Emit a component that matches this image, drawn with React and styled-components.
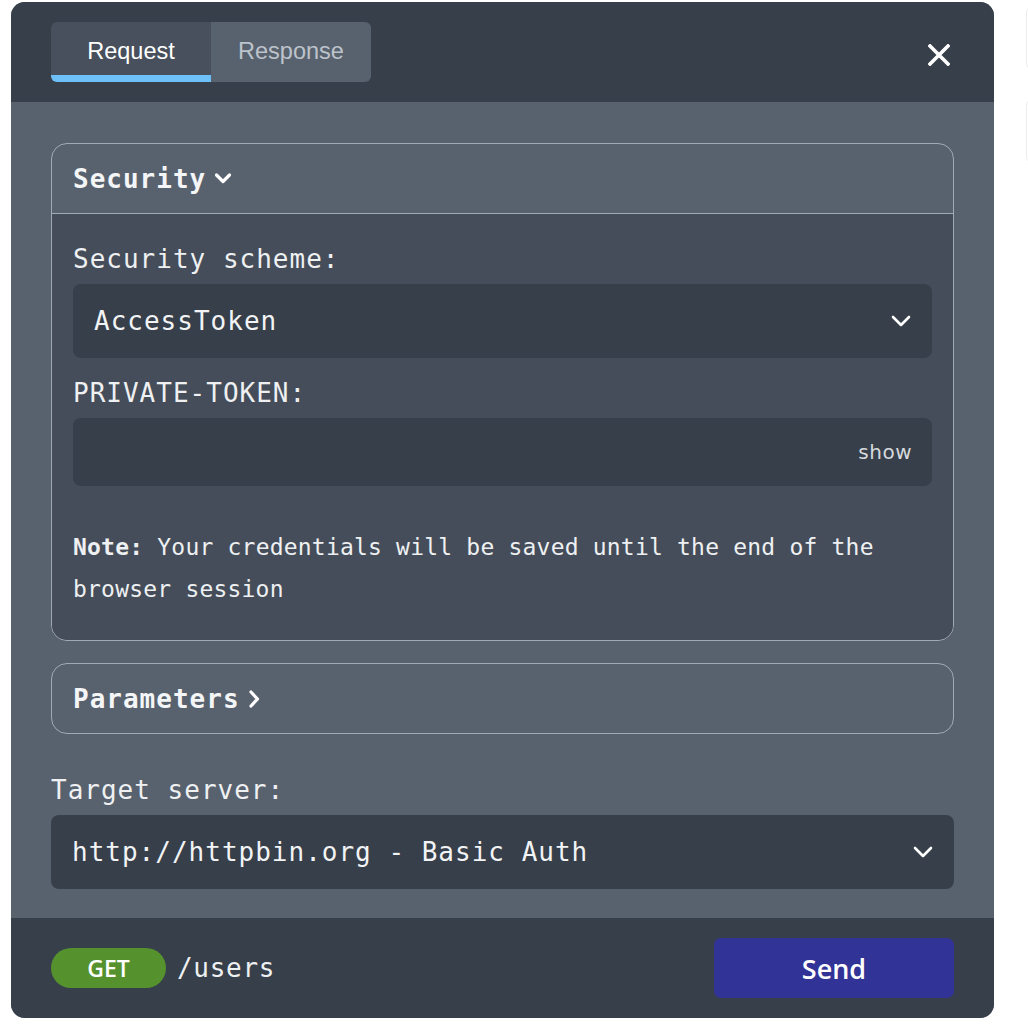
import React from "react";
import styled, { createGlobalStyle, css } from "styled-components";

const GlobalStyle = createGlobalStyle`
  html, body {
    margin: 0;
    padding: 0;
    background: #ffffff;
    overflow: hidden;
  }
  * { box-sizing: border-box; }
`;

const MONO = `"DejaVu Sans Mono", "Liberation Mono", monospace`;
const SANS = `"Open Sans", "Noto Sans", sans-serif`;

const Page = styled.div`
  display: flex;
  align-items: flex-start;
  gap: 32px;
  padding: 2px 0 0 11px;
  width: 1100px;
`;

const Panel = styled.div`
  width: 983px;
  flex: none;
  display: flex;
  flex-direction: column;
  border-radius: 14px;
  overflow: hidden;
  background: #58626e;
  color: #f2f3f5;
  font-family: ${MONO};
`;

const Header = styled.div`
  height: 100px;
  background: #363f4a;
  display: flex;
  align-items: center;
  justify-content: space-between;
  padding: 0 44px 0 40px;
`;

const Tabs = styled.div`
  display: flex;
  height: 60px;
  border-radius: 6px;
  overflow: hidden;
`;

const Tab = styled.div`
  width: 160px;
  display: flex;
  align-items: center;
  justify-content: center;
  padding-bottom: 1px;
  font-family: "Liberation Sans", Arial, sans-serif;
  font-size: 23.5px;
  ${(p) =>
    p.$active
      ? css`
          background: #47505c;
          color: #ffffff;
          box-shadow: inset 0 -7px 0 #6dc1f8;
        `
      : css`
          background: #58626e;
          color: #bcc3cb;
        `}
`;

const CloseButton = styled.div`
  width: 22px;
  height: 22px;
  margin-top: 6px;
  display: flex;
`;

const Body = styled.div`
  display: flex;
  flex-direction: column;
  padding: 41px 40px 29px;
`;

const Section = styled.div`
  border: 1px solid #a0aab5;
  border-radius: 16px;
  overflow: hidden;
  & + & {
    margin-top: 22px;
  }
`;

const SectionHeader = styled.div`
  height: ${(p) => (p.$open ? "70px" : "69px")};
  display: flex;
  align-items: center;
  gap: 8px;
  padding: 0 21px;
  font-weight: bold;
  font-size: 26px;
  letter-spacing: 1px;
  color: #f4f5f7;
  ${(p) => p.$open && css`border-bottom: 1px solid #a0aab5;`}
`;

const SectionBody = styled.div`
  background: #444d59;
  padding: 27px 21px 30px;
  display: flex;
  flex-direction: column;
`;

const FieldLabel = styled.div`
  font-size: 26px;
  line-height: 36px;
  letter-spacing: 1px;
  color: #eef0f2;
  margin-top: ${(p) => p.$top || 0}px;
  margin-bottom: 7px;
`;

const SelectBox = styled.div`
  height: 74px;
  border-radius: 8px;
  background: #363f4a;
  display: flex;
  align-items: center;
  justify-content: space-between;
  padding: 0 21px;
  font-size: 26px;
  letter-spacing: 1px;
  color: #f2f3f5;
`;

const InputBox = styled.div`
  height: 68px;
  border-radius: 8px;
  background: #363f4a;
  display: flex;
  align-items: center;
  justify-content: flex-end;
  padding: 0 20px;
`;

const ShowToggle = styled.span`
  font-family: "DejaVu Sans", sans-serif;
  font-size: 20px;
  letter-spacing: 0.5px;
  color: #d6dade;
`;

const Note = styled.p`
  margin: 40px 0 0;
  font-size: 23px;
  line-height: 42px;
  letter-spacing: 0.2px;
  color: #eef0f2;
`;

const NoteLead = styled.strong`
  font-weight: bold;
`;

const Footer = styled.div`
  height: 100px;
  background: #363f4a;
  display: flex;
  align-items: center;
  padding: 0 40px;
`;

const MethodPill = styled.span`
  width: 115px;
  height: 40px;
  border-radius: 20px;
  background: #55922e;
  display: flex;
  align-items: center;
  justify-content: center;
  font-family: ${SANS};
  font-weight: 600;
  font-size: 23px;
  color: #ffffff;
`;

const PathText = styled.span`
  margin-left: 11px;
  font-size: 26px;
  letter-spacing: 0.7px;
  color: #eef0f2;
`;

const SendButton = styled.button`
  margin-left: auto;
  width: 240px;
  height: 60px;
  border: none;
  border-radius: 7px;
  background: #313397;
  color: #ffffff;
  font-family: ${SANS};
  font-weight: 600;
  font-size: 27px;
  cursor: pointer;
`;

const SideColumn = styled.div`
  display: flex;
  flex-direction: column;
  gap: 27px;
  padding-top: 3px;
`;

const GhostCard = styled.div`
  width: 200px;
  height: 66px;
  border: 1px solid #ececef;
  border-radius: 8px;
`;

const ChevronDown = ({ size = 20, stroke = 2.6 }) => (
  <svg width={size} height={size * 0.62} viewBox="0 0 20 12.4" fill="none">
    <path
      d="M2 2 L10 10 L18 2"
      stroke="#ffffff"
      strokeWidth={stroke}
      strokeLinecap="round"
      strokeLinejoin="round"
    />
  </svg>
);

const ChevronSmallDown = () => (
  <svg width="18" height="13" viewBox="0 0 18 13" fill="none">
    <path
      d="M2.5 3 L9 9.5 L15.5 3"
      stroke="#ffffff"
      strokeWidth="3.2"
      strokeLinecap="round"
      strokeLinejoin="round"
    />
  </svg>
);

const ChevronSmallRight = () => (
  <svg width="13" height="20" viewBox="0 0 13 20" fill="none">
    <path
      d="M3 3 L9.5 10 L3 17"
      stroke="#ffffff"
      strokeWidth="3.2"
      strokeLinecap="round"
      strokeLinejoin="round"
    />
  </svg>
);

const CloseIcon = () => (
  <svg width="22" height="22" viewBox="0 0 22 22" fill="none">
    <path
      d="M2 2 L20 20 M20 2 L2 20"
      stroke="#ffffff"
      strokeWidth="3.6"
      strokeLinecap="square"
    />
  </svg>
);

export default function App() {
  return (
    <>
      <GlobalStyle />
      <Page>
        <Panel>
          <Header>
            <Tabs>
              <Tab $active>Request</Tab>
              <Tab>Response</Tab>
            </Tabs>
            <CloseButton>
              <CloseIcon />
            </CloseButton>
          </Header>
          <Body>
            <Section>
              <SectionHeader $open>
                Security
                <ChevronSmallDown />
              </SectionHeader>
              <SectionBody>
                <FieldLabel>Security scheme:</FieldLabel>
                <SelectBox>
                  AccessToken
                  <ChevronDown />
                </SelectBox>
                <FieldLabel $top={17}>PRIVATE-TOKEN:</FieldLabel>
                <InputBox>
                  <ShowToggle>show</ShowToggle>
                </InputBox>
                <Note>
                  <NoteLead>Note:</NoteLead>{" "}Your credentials will be saved until the end of the browser session
                </Note>
              </SectionBody>
            </Section>
            <Section>
              <SectionHeader>
                Parameters
                <ChevronSmallRight />
              </SectionHeader>
            </Section>
            <FieldLabel $top={38}>Target server:</FieldLabel>
            <SelectBox>
              http://httpbin.org - Basic Auth
              <ChevronDown />
            </SelectBox>
          </Body>
          <Footer>
            <MethodPill>GET</MethodPill>
            <PathText>/users</PathText>
            <SendButton>Send</SendButton>
          </Footer>
        </Panel>
        <SideColumn>
          <GhostCard />
          <GhostCard />
        </SideColumn>
      </Page>
    </>
  );
}
